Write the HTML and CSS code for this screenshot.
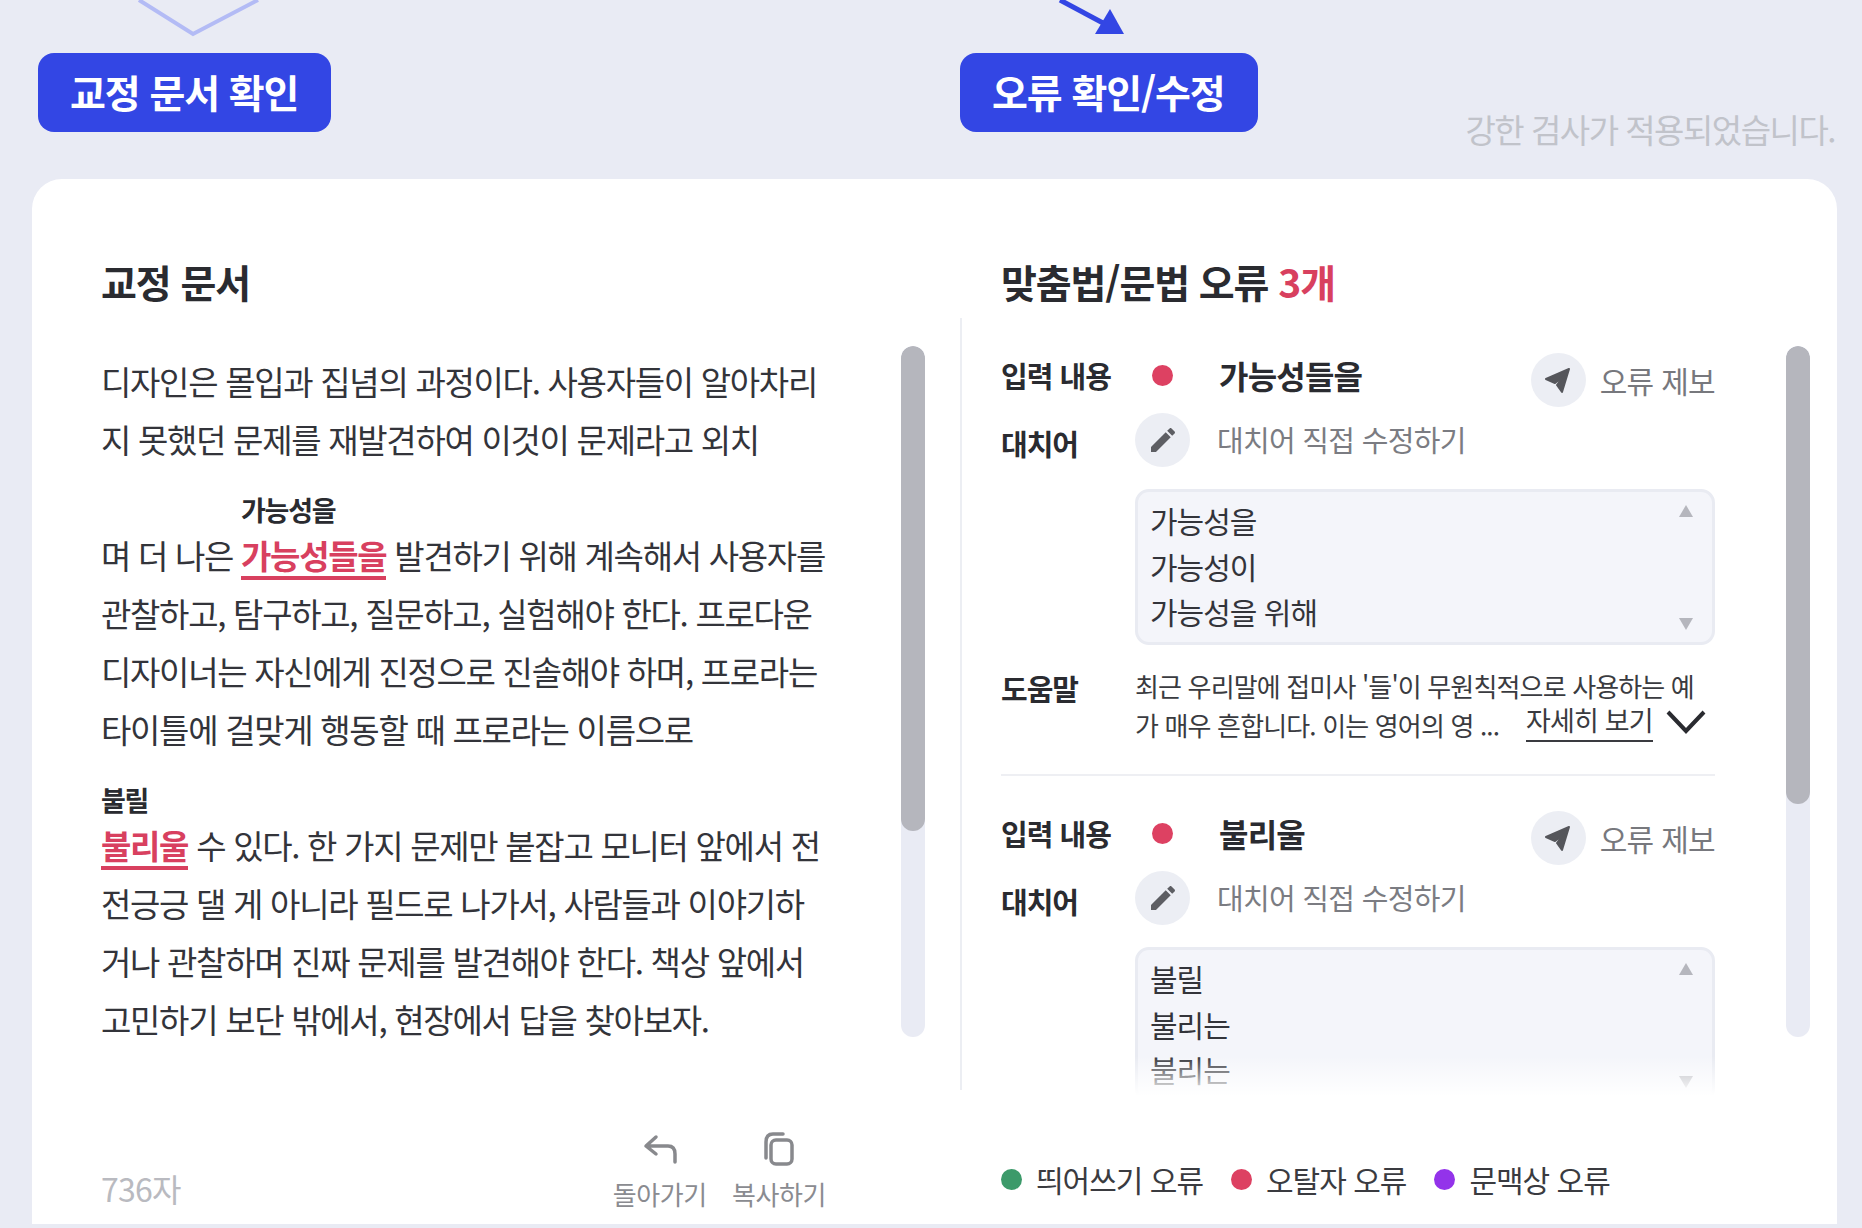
FILE: index.html
```html
<!DOCTYPE html>
<html lang="ko">
<head>
<meta charset="utf-8">
<title>맞춤법 검사</title>
<link rel="stylesheet" href="styles.css">
</head>
<body>
<div class="page">
  <header class="top">
    <svg class="flow-lines" width="1862" height="40" viewBox="0 0 1862 40" aria-hidden="true">
      <path class="chev" d="M139 0 L193 34 L258 0"/>
      <path class="arrow-line" d="M1060 0 L1103 23"/>
      <path class="arrow-head" d="M1110 9 L1124 34 L1095 34 Z"/>
    </svg>
    <div class="top-left"><div class="badge">교정 문서 확인</div></div>
    <div class="top-right">
      <div class="badge">오류 확인/수정</div>
      <p class="note">강한 검사가 적용되었습니다.</p>
    </div>
  </header>

  <main class="card">
    <div class="columns">
      <section class="doc">
        <h2 class="title">교정 문서</h2>
        <div class="doc-body">
          <div class="doc-text">
            <div class="line">디자인은 몰입과 집념의 과정이다. 사용자들이 알아차리</div>
            <div class="line">지 못했던 문제를 재발견하여 이것이 문제라고 외치</div>
            <div class="line annotated">며 더 나은 <span class="fix"><span class="hint">가능성을</span>가능성들을</span> 발견하기 위해 계속해서 사용자를</div>
            <div class="line">관찰하고, 탐구하고, 질문하고, 실험해야 한다. 프로다운</div>
            <div class="line">디자이너는 자신에게 진정으로 진솔해야 하며, 프로라는</div>
            <div class="line">타이틀에 걸맞게 행동할 때 프로라는 이름으로</div>
            <div class="line annotated"><span class="fix"><span class="hint">불릴</span>불리울</span> 수 있다. 한 가지 문제만 붙잡고 모니터 앞에서 전</div>
            <div class="line">전긍긍 댈 게 아니라 필드로 나가서, 사람들과 이야기하</div>
            <div class="line">거나 관찰하며 진짜 문제를 발견해야 한다. 책상 앞에서</div>
            <div class="line">고민하기 보단 밖에서, 현장에서 답을 찾아보자.</div>
          </div>
          <div class="scroll"><div class="thumb thumb-left"></div></div>
        </div>
      </section>

      <section class="errors">
        <h2 class="title title-right">맞춤법/문법 오류 <em class="count">3개</em></h2>
        <div class="errors-body">
          <div class="entries">
            <article class="entry">
              <div class="row row-input">
                <span class="label label-input">입력 내용</span>
                <span class="dot-cell"><i class="dot dot-red"></i></span>
                <strong class="word">가능성들을</strong>
                <button class="report">
                  <span class="round"><svg width="30" height="30" viewBox="0 0 30 30"><path class="i-send" d="M26 4 L3 14 L12 18 L21 11 L14 20 L19 27 Z"/></svg></span>
                  <span>오류 제보</span>
                </button>
              </div>
              <div class="row row-replace">
                <span class="label label-replace">대치어</span>
                <span class="round"><svg width="32" height="32" viewBox="0 0 24 24"><path class="i-pen" d="M3 17.25V21h3.750L17.810 9.940l-3.750-3.750L3 17.250zM20.710 7.040c.39-.39.39-1.020 0-1.410l-2.340-2.340c-.39-.39-1.020-.39-1.410 0l-1.830 1.830 3.750 3.750 1.830-1.830z"/></svg></span>
                <span class="edit-hint">대치어 직접 수정하기</span>
              </div>
              <div class="options">
                <div class="option">가능성을</div>
                <div class="option">가능성이</div>
                <div class="option">가능성을 위해</div>
                <i class="spin spin-up"></i><i class="spin spin-down"></i>
              </div>
              <div class="row row-help">
                <span class="label label-help">도움말</span>
                <div class="help">
                  <div>최근 우리말에 접미사 '들'이 무원칙적으로 사용하는 예</div>
                  <div class="help-last">
                    <span>가 매우 흔합니다. 이는 영어의 영 ...</span>
                    <a class="more">자세히 보기</a>
                    <svg class="more-chev" width="40" height="24" viewBox="0 0 40 24"><path d="M2 2 L20 21 L38 2"/></svg>
                  </div>
                </div>
              </div>
            </article>

            <article class="entry">
              <div class="row row-input">
                <span class="label label-input">입력 내용</span>
                <span class="dot-cell"><i class="dot dot-red"></i></span>
                <strong class="word">불리울</strong>
                <button class="report">
                  <span class="round"><svg width="30" height="30" viewBox="0 0 30 30"><path class="i-send" d="M26 4 L3 14 L12 18 L21 11 L14 20 L19 27 Z"/></svg></span>
                  <span>오류 제보</span>
                </button>
              </div>
              <div class="row row-replace">
                <span class="label label-replace">대치어</span>
                <span class="round"><svg width="32" height="32" viewBox="0 0 24 24"><path class="i-pen" d="M3 17.25V21h3.750L17.810 9.940l-3.750-3.750L3 17.250zM20.710 7.040c.39-.39.39-1.020 0-1.410l-2.340-2.340c-.39-.39-1.020-.39-1.410 0l-1.830 1.830 3.750 3.750 1.830-1.830z"/></svg></span>
                <span class="edit-hint">대치어 직접 수정하기</span>
              </div>
              <div class="options">
                <div class="option">불릴</div>
                <div class="option">불리는</div>
                <div class="option">불리는</div>
                <i class="spin spin-up"></i><i class="spin spin-down"></i>
              </div>
            </article>
          </div>
          <div class="scroll"><div class="thumb thumb-right"></div></div>
          <div class="fade"></div>
        </div>
      </section>
    </div>

    <footer class="footer">
      <div class="foot-left">
        <span class="chars">736자</span>
        <div class="actions">
          <button class="action">
            <svg width="36" height="34" viewBox="0 0 36 34"><path class="i-line" d="M14 5 L4 14 L14 22 M5 14 H26 C31 14 33 17 33 22 V30"/></svg>
            <span>돌아가기</span>
          </button>
          <button class="action">
            <svg width="36" height="34" viewBox="0 0 36 34"><path class="i-line" d="M5 26 V10 C5 4 8 2 12 2 H22"/><rect class="i-line" x="10" y="8" width="21" height="24" rx="5"/></svg>
            <span>복사하기</span>
          </button>
        </div>
      </div>
      <ul class="legend">
        <li class="legend-item"><i class="dot dot-green"></i>띄어쓰기 오류</li>
        <li class="legend-item"><i class="dot dot-red"></i>오탈자 오류</li>
        <li class="legend-item"><i class="dot dot-purple"></i>문맥상 오류</li>
      </ul>
    </footer>
  </main>
</div>
</body>
</html>
```

FILE: styles.css
```css
* { box-sizing: border-box; }
html, body { margin: 0; padding: 0; }
body {
  width: 1862px;
  height: 1228px;
  overflow: hidden;
  background: #e9ebf4;
  color: #2a2b30;
  font-family: "Noto Sans CJK KR", "Noto Sans", sans-serif;
}
button { font: inherit; border: 0; background: none; padding: 0; cursor: pointer; }
em, i { font-style: normal; }
.page { padding: 0 25px 4px 32px; height: 1228px; display: flex; flex-direction: column; }

/* top */
.top { position: relative; height: 179px; display: grid; grid-template-columns: 928px 1fr; padding-top: 53px; }
.flow-lines { position: absolute; left: -32px; top: 0; }
.chev { fill: none; stroke: #b3bbf5; stroke-width: 4; }
.arrow-line { fill: none; stroke: #3346e4; stroke-width: 5; }
.arrow-head { fill: #3346e4; }
.top-left { padding-left: 6px; }
.top-right { display: flex; justify-content: space-between; align-items: flex-start; }
.badge {
  height: 79px;
  padding: 0 33px 3px 32px;
  display: inline-flex;
  align-items: center;
  border-radius: 16px;
  background: #3346e4;
  color: #fff;
  font-size: 39px;
  font-weight: 700;
  letter-spacing: -1.1px;
}
.note { margin: 50px 2px 0 0; color: #c1c3ca; font-size: 33px; line-height: 52px; letter-spacing: -1.5px; }

/* card */
.card { flex: 1; background: #fff; border-radius: 30px 30px 0 0; display: flex; flex-direction: column; min-height: 0; }
.columns { display: grid; grid-template-columns: 928px 1fr; height: 911px; }
.title { margin: 0; height: 139px; padding: 74px 0 0 69px; font-size: 39px; line-height: 56px; font-weight: 700; letter-spacing: -1.1px; color: #2a2b30; }
.title-right { padding-left: 41px; }
.count { color: #d8405f; }

/* document */
.doc { min-width: 0; }
.doc-body { display: flex; justify-content: space-between; padding: 0 35px 0 69px; }
.doc-text { padding-top: 34px; font-size: 33px; line-height: 58px; letter-spacing: -1.3px; color: #33343a; white-space: nowrap; }
.line.annotated { padding-top: 58px; }
.fix { position: relative; display: inline-block; height: 54px; line-height: 58px; color: #d8405f; font-weight: 700; border-bottom: 4px solid #d8405f; }
.hint { position: absolute; left: 0; bottom: 46px; color: #2a2b30; font-size: 27px; line-height: 40px; font-weight: 700; letter-spacing: -1.3px; }
.scroll { width: 24px; height: 691px; margin-top: 28px; border-radius: 12px; background: #e9ebf4; flex: none; overflow: hidden; }
.thumb { border-radius: 12px; background: #b5b6bd; }
.thumb-left { height: 485px; }
.thumb-right { height: 458px; }

/* errors */
.errors { min-width: 0; }
.errors-body { position: relative; height: 772px; border-left: 2px solid #eceef3; display: flex; padding-left: 39px; }
.entries { width: 714px; height: 778px; overflow: hidden; margin-right: 71px; flex: none; }
.entry { padding: 35px 0 30px; }
.entry + .entry { border-top: 2px solid #eeeff3; }
.row { display: flex; }
.row-input { height: 54px; align-items: center; }
.row-replace { height: 54px; margin-top: 6px; align-items: center; }
.row-help { margin-top: 21px; }
.label { width: 134px; flex: none; font-size: 29px; font-weight: 700; letter-spacing: -1px; line-height: 40px; color: #2a2b30; }
.label-input { margin-top: -10px; }
.label-replace { margin-top: 6px; }
.label-help { margin-top: 2px; }
.dot-cell { width: 55px; flex: none; display: flex; justify-content: center; margin-top: -10px; }
.dot { display: block; width: 21px; height: 21px; border-radius: 50%; }
.dot-red { background: #dd4162; }
.dot-green { background: #3c9a6a; }
.dot-purple { background: #9333ea; }
.word { margin: -10px 0 0 29px; font-size: 32px; font-weight: 700; letter-spacing: -.8px; color: #2a2b30; }
.report { margin-left: auto; display: flex; align-items: center; gap: 14px; color: #77787d; font-size: 30px; letter-spacing: -.7px; }
.round { width: 55px; height: 54px; flex: none; border-radius: 50%; background: #eceef4; display: flex; align-items: center; justify-content: center; }
.i-send { fill: #55565b; stroke: #55565b; stroke-width: 2; stroke-linejoin: round; }
.i-pen { fill: #5d5e63; }
.edit-hint { margin: -2px 0 0 27px; color: #7b7c82; font-size: 29px; letter-spacing: -.7px; }
.options { position: relative; margin: 22px 0 0 134px; height: 156px; padding: 6px 12px; border: 3px solid #e9ebf2; border-radius: 14px; background: #f4f5fa; }
.option { font-size: 30px; line-height: 45.5px; letter-spacing: -1px; color: #33343a; }
.spin { position: absolute; right: 19px; width: 0; height: 0; border-left: 7px solid transparent; border-right: 7px solid transparent; }
.spin-up { top: 13px; border-bottom: 12px solid #b5b6bd; }
.spin-down { bottom: 12px; border-top: 12px solid #b5b6bd; }
.help { flex: 1; font-size: 26px; line-height: 39px; letter-spacing: -.85px; color: #3a3b40; white-space: nowrap; }
.help-last { display: flex; align-items: flex-start; }
.more { margin-left: 27px; height: 37px; line-height: 30px; font-size: 27px; border-bottom: 2px solid #3a3b40; }
.more-chev { margin: 5px 0 0 13px; }
.more-chev path { fill: none; stroke: #2a2b30; stroke-width: 4; }
.fade { position: absolute; left: 0; right: 0; bottom: -6px; height: 40px; background: linear-gradient(rgba(255,255,255,0), #fff); pointer-events: none; }

/* footer */
.footer { flex: 1; display: grid; grid-template-columns: 928px 1fr; }
.foot-left { display: flex; justify-content: space-between; padding: 0 134px 0 69px; }
.chars { margin-top: 78px; font-size: 32px; line-height: 40px; color: #b9bac0; letter-spacing: -.8px; }
.actions { display: flex; gap: 25px; padding-top: 42px; }
.action { display: flex; flex-direction: column; align-items: center; color: #8a8b90; font-size: 26px; line-height: 40px; letter-spacing: -.4px; }
.action span { margin-top: 8px; }
.i-line { fill: none; stroke: #88898d; stroke-width: 3.500; stroke-linecap: round; stroke-linejoin: round; }
.legend { list-style: none; margin: 0; padding: 69px 0 0 41px; display: flex; gap: 28px; }
.legend-item { display: flex; align-items: center; gap: 14px; height: 40px; font-size: 30px; letter-spacing: -1px; color: #3a3b40; }
```
